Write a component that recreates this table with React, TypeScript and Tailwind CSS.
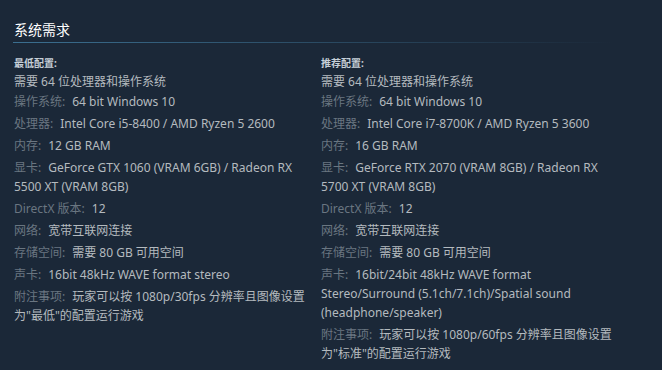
import React from 'react';

type Item = { label?: string; value: string };

const minReq: Item[] = [
  { value: '需要 64 位处理器和操作系统' },
  { label: '操作系统:', value: '64 bit Windows 10' },
  { label: '处理器:', value: 'Intel Core i5-8400 / AMD Ryzen 5 2600' },
  { label: '内存:', value: '12 GB RAM' },
  { label: '显卡:', value: 'GeForce GTX 1060 (VRAM 6GB) / Radeon RX 5500 XT (VRAM 8GB)' },
  { label: 'DirectX 版本:', value: '12' },
  { label: '网络:', value: '宽带互联网连接' },
  { label: '存储空间:', value: '需要 80 GB 可用空间' },
  { label: '声卡:', value: '16bit 48kHz WAVE format stereo' },
  { label: '附注事项:', value: '玩家可以按 1080p/30fps 分辨率且图像设置为"最低"的配置运行游戏' },
];

const recReq: Item[] = [
  { value: '需要 64 位处理器和操作系统' },
  { label: '操作系统:', value: '64 bit Windows 10' },
  { label: '处理器:', value: 'Intel Core i7-8700K / AMD Ryzen 5 3600' },
  { label: '内存:', value: '16 GB RAM' },
  { label: '显卡:', value: 'GeForce RTX 2070 (VRAM 8GB) / Radeon RX 5700 XT (VRAM 8GB)' },
  { label: 'DirectX 版本:', value: '12' },
  { label: '网络:', value: '宽带互联网连接' },
  { label: '存储空间:', value: '需要 80 GB 可用空间' },
  { label: '声卡:', value: '16bit/24bit 48kHz WAVE format Stereo/Surround (5.1ch/7.1ch)/Spatial sound (headphone/speaker)' },
  { label: '附注事项:', value: '玩家可以按 1080p/60fps 分辨率且图像设置为"标准"的配置运行游戏' },
];

const ReqColumn = ({ title, items }: { title: string; items: Item[] }) => (
  <div className="w-[296px]">
    <div className="mt-[11px] text-[10px] leading-[18px] font-bold text-[#c7d0d8]">{title}</div>
    <ul>
      {items.map((it, i) => (
        <li
          key={i}
          className={`text-[12px] leading-[19px] text-[#b4babf] ${i === 0 ? '' : i === 1 ? 'mt-[1px]' : 'mt-[3px]'}`}
        >
          {it.label && <span className="text-[#6a7681]">{it.label}</span>}
          <span className={it.label ? 'pl-[7px]' : ''}>{it.value}</span>
        </li>
      ))}
    </ul>
  </div>
);

export default function App() {
  return (
    <div
      className="min-h-screen bg-[#1b2838] px-[14px] pt-[20px]"
      style={{ fontFamily: '"Noto Sans", "Noto Sans CJK SC", sans-serif' }}
    >
      <h2 className="text-[14px] leading-[20px] text-white pb-[2px]">系统需求</h2>
      <div className="h-px w-[600px] -ml-px bg-gradient-to-r from-[#3b6f90] to-transparent" />
      <div className="flex gap-[11px]">
        <ReqColumn title="最低配置:" items={minReq} />
        <ReqColumn title="推荐配置:" items={recReq} />
      </div>
    </div>
  );
}
